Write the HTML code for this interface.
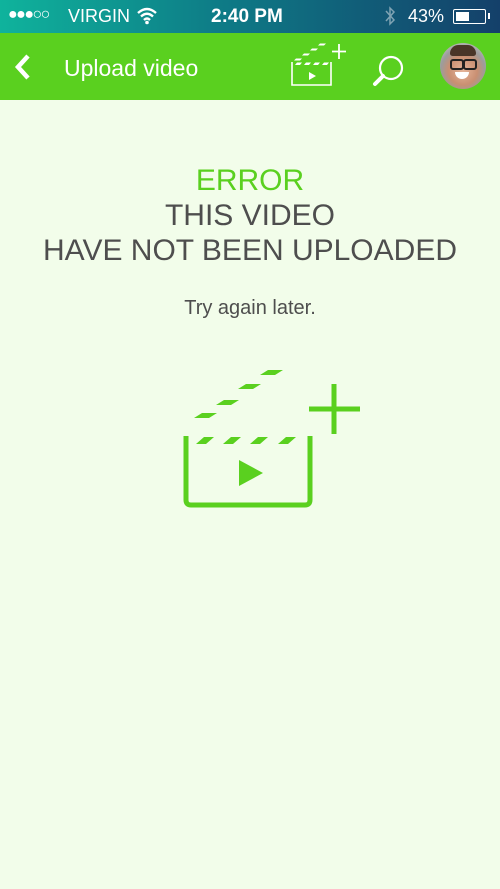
<!DOCTYPE html>
<html><head><meta charset="utf-8"><style>
*{margin:0;padding:0}
body{width:500px;height:889px;background:#f2fdea;font-family:"Liberation Sans",sans-serif;position:relative;overflow:hidden}
.sb{position:absolute;top:0;left:0;width:500px;height:33px;background:linear-gradient(90deg,#0fb39c,#0e7a86 45%,#14406a);color:#fff;font-size:18px}
.nav{position:absolute;top:33px;left:0;width:500px;height:67px;background:#5ad01f;color:#fff}
.t{position:absolute;left:0;width:500px;text-align:center;color:#4e4e4e;font-size:30px}
</style></head><body>
<div class="sb">
<span style="position:absolute;left:8px;top:6px;font-size:16px;letter-spacing:-1.5px">●●●○○</span>
<span style="position:absolute;left:68px;top:6px">VIRGIN</span>
<svg style="position:absolute;left:136px;top:7px" width="22" height="18" viewBox="0 0 22 18"><path d="M2 6 Q11 -2 20 6 M5 9.5 Q11 4 17 9.5 M8 13 Q11 10 14 13" stroke="#fff" stroke-width="2.4" fill="none"/><circle cx="11" cy="15.5" r="1.8" fill="#fff"/></svg>
<span style="position:absolute;left:211px;top:6px;font-size:19px;font-weight:bold">2:40 PM</span>
<svg style="position:absolute;left:384px;top:6px" width="12" height="20" viewBox="0 0 12 20"><path d="M2 5 L10 14 L6 18 V2 L10 6 L2 15" stroke="#7fa3b3" stroke-width="1.5" fill="none"/></svg>
<span style="position:absolute;left:408px;top:6px">43%</span>
<div style="position:absolute;left:453px;top:9px;width:31px;height:13px;border:1.5px solid #fff;border-radius:2px"><div style="margin:2px;width:13px;height:9px;background:#fff"></div></div>
<div style="position:absolute;left:488px;top:13px;width:2px;height:6px;background:#fff"></div>
</div>
<div class="nav">
<svg style="position:absolute;left:13px;top:20px" width="20" height="28"><path d="M15 3 L5 14 L15 25" stroke="#fff" stroke-width="4.5" fill="none"/></svg>
<span style="position:absolute;left:64px;top:22px;font-size:23px">Upload video</span>
<svg style="position:absolute;left:285px;top:5px" width="65" height="52" viewBox="0 0 65 52" fill="#fff">
<path d="M7 24 V47 H46 V24" stroke="#fff" stroke-width="1.6" fill="none"/>
<path d="M10 27h5l2-2.5h-5zM19 27h5l2-2.5h-5zM28 27h5l2-2.5h-5zM37 27h5l2-2.5h-5z"/>
<path d="M9 22.5h6l2-2h-6zM17 17.5h6l2-2h-6zM25 12.5h6l2-2h-6zM33 7.5h6l2-2h-6z"/>
<path d="M24 34 L31 38 L24 42z"/>
<path d="M54 6 V21 M47 13.5 H61" stroke="#fff" stroke-width="1.8"/>
</svg>
<svg style="position:absolute;left:372px;top:20px" width="34" height="34" viewBox="0 0 34 34"><circle cx="19" cy="15" r="11" stroke="#fff" stroke-width="2.2" fill="none"/><path d="M11 23 L3 31" stroke="#fff" stroke-width="4" stroke-linecap="round"/></svg>
<div style="position:absolute;left:440px;top:10px;width:46px;height:46px;border-radius:50%;background:radial-gradient(circle at 50% 60%,#e5b59a 0,#c98f72 40%,#9c9c9c 62%,#d4d4d4 100%);overflow:hidden">
<div style="position:absolute;left:10px;top:2px;width:26px;height:11px;background:#4a3528;border-radius:10px 10px 3px 3px"></div>
<div style="position:absolute;left:10px;top:16px;width:10px;height:7px;border:2px solid #222;border-radius:3px"></div>
<div style="position:absolute;left:23px;top:16px;width:10px;height:7px;border:2px solid #222;border-radius:3px"></div>
<div style="position:absolute;left:15px;top:29px;width:14px;height:7px;background:#fff;border-radius:0 0 7px 7px"></div>
</div>
</div>
<div class="t" style="top:164px;color:#5ad01f">ERROR</div>
<div class="t" style="top:199px">THIS VIDEO</div>
<div class="t" style="top:234px">HAVE NOT BEEN UPLOADED</div>
<div class="t" style="top:297px;font-size:20px">Try again later.</div>
<svg style="position:absolute;left:180px;top:365px" width="185" height="146" viewBox="180 365 185 146" fill="#5ad01f">
<path d="M186 436 V500 Q186 505 191 505 H305 Q310 505 310 500 V436" stroke="#5ad01f" stroke-width="5" fill="none"/>
<path d="M196 444h10l8-7h-10zM223 444h10l8-7h-10zM250 444h10l8-7h-10zM278 444h10l8-7h-10z"/>
<path d="M194 418h15l8-5h-15zM216 405h15l8-5h-15zM238 389h15l8-5h-15zM260 375h15l8-5h-15z"/>
<path d="M239 460 L263 473 L239 486z"/>
<path d="M334 384 V434 M309 409 H360" stroke="#5ad01f" stroke-width="5"/>
</svg>
</body></html>
